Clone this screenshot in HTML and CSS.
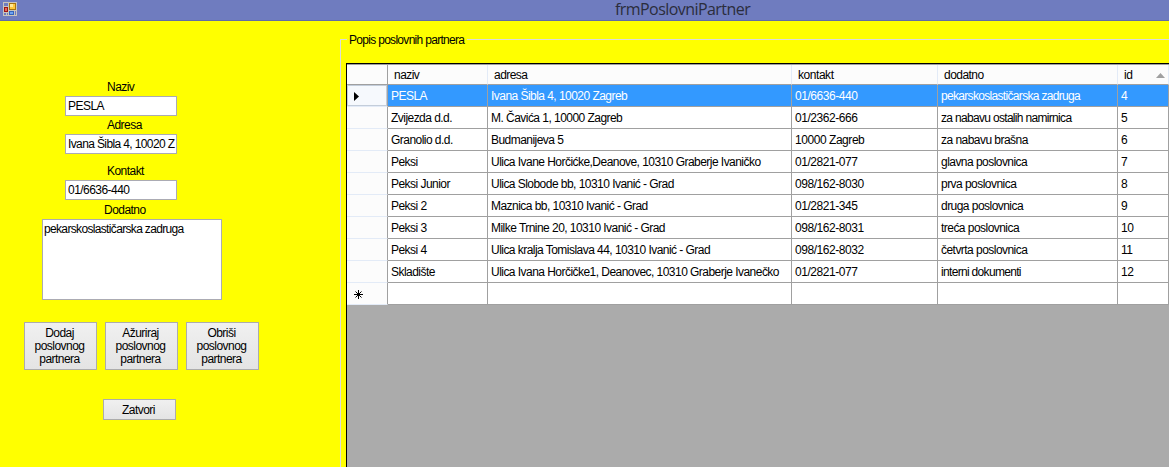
FILE: index.html
```html
<!DOCTYPE html>
<html lang="hr">
<head>
<meta charset="utf-8">
<title>frmPoslovniPartner</title>
<link rel="stylesheet" href="styles.css">
</head>
<body>
<div class="window">
  <header class="titlebar">
    <svg class="app-icon" width="14" height="14" viewBox="0 0 14 14" shape-rendering="crispEdges">
      <path fill="#c9c5bd" d="M0 0h14v14H0z"/>
      <path fill="#6f7cbf" d="M1 1h4v3H1zM1 11h2v2H1zM4 11h1v2H4zM12 9h1v4h-1z"/>
      <path fill="#a87410" d="M6 1h7v7H6z"/>
      <path fill="#ffc83c" d="M7 2h5v5H7z"/>
      <path fill="#ffe999" d="M7 2h3v3H7z"/>
      <path fill="#9c1414" d="M1 5h4v5H1z"/>
      <path fill="#e06a5a" d="M2 6h2v3H2z"/>
      <path fill="#3264bd" d="M6 9h5v4H6z"/>
      <path fill="#6fa4f0" d="M7 10h3v2H7z"/>
    </svg>
    <h1 class="caption">frmPoslovniPartner</h1>
  </header>
  <main class="client">
    <section class="form">
      <div class="field naziv"><label>Naziv</label><div class="textbox">PESLA</div></div>
      <div class="field adresa"><label>Adresa</label><div class="textbox"><div class="value">Ivana Šibla 4, 10020 Z</div></div></div>
      <div class="field kontakt"><label>Kontakt</label><div class="textbox">01/6636-440</div></div>
      <div class="field dodatno"><label>Dodatno</label><div class="textbox memo">pekarskoslastičarska zadruga</div></div>
      <div class="actions">
        <button>Dodaj<br>poslovnog<br>partnera</button>
        <button>Ažuriraj<br>poslovnog<br>partnera</button>
        <button>Obriši<br>poslovnog<br>partnera</button>
      </div>
      <button class="close">Zatvori</button>
    </section>
    <section class="group">
      <h2 class="legend">Popis poslovnih partnera</h2>
      <div class="grid">
        <div class="row head"><span></span><span>naziv</span><span>adresa</span><span>kontakt</span><span>dodatno</span><span class="sorted">id<svg width="9" height="5" viewBox="0 0 9 5"><path fill="#a0a0a0" d="M4.5 0 9 5H0z"/></svg></span></div>
        <div class="row selected"><span class="mark"><svg width="5" height="9" viewBox="0 0 5 9"><path d="M0 0 5 4.5 0 9z"/></svg></span><span>PESLA</span><span>Ivana Šibla 4, 10020 Zagreb</span><span>01/6636-440</span><span class="tight">pekarskoslastičarska zadruga</span><span>4</span></div>
        <div class="row"><span></span><span>Zvijezda d.d.</span><span>M. Čavića 1, 10000 Zagreb</span><span>01/2362-666</span><span class="tight">za nabavu ostalih namirnica</span><span>5</span></div>
        <div class="row"><span></span><span>Granolio d.d.</span><span>Budmanijeva 5</span><span>10000 Zagreb</span><span>za nabavu brašna</span><span>6</span></div>
        <div class="row"><span></span><span>Peksi</span><span>Ulica Ivane Horčićke,Deanove, 10310 Graberje Ivaničko</span><span>01/2821-077</span><span>glavna poslovnica</span><span>7</span></div>
        <div class="row"><span></span><span>Peksi Junior</span><span>Ulica Slobode bb, 10310 Ivanić - Grad</span><span>098/162-8030</span><span>prva poslovnica</span><span>8</span></div>
        <div class="row"><span></span><span>Peksi 2</span><span>Maznica bb, 10310 Ivanić - Grad</span><span>01/2821-345</span><span>druga poslovnica</span><span>9</span></div>
        <div class="row"><span></span><span>Peksi 3</span><span>Milke Trnine 20, 10310 Ivanić - Grad</span><span>098/162-8031</span><span>treća poslovnica</span><span>10</span></div>
        <div class="row"><span></span><span>Peksi 4</span><span>Ulica kralja Tomislava 44, 10310 Ivanić - Grad</span><span>098/162-8032</span><span>četvrta poslovnica</span><span>11</span></div>
        <div class="row"><span></span><span>Skladište</span><span>Ulica Ivana Horčičke1, Deanovec, 10310 Graberje Ivanečko</span><span>01/2821-077</span><span class="tight">interni dokumenti</span><span>12</span></div>
        <div class="row"><span class="mark new"><svg width="9" height="9" viewBox="0 0 9 9"><path stroke="#000" fill="none" d="M4.5 0v9M0 4.5h9M1.5 1.5l6 6M7.5 1.5l-6 6"/></svg></span><span></span><span></span><span></span><span></span><span></span></div>
      </div>
    </section>
  </main>
</div>
</body>
</html>
```
FILE: styles.css
```css
* { box-sizing: border-box; }
body {
  margin: 0;
  font: 12px/13px "Liberation Sans", Arial, sans-serif;
  letter-spacing: -0.54px;
  color: #000;
}
.window {
  width: 1169px;
  height: 467px;
  overflow: hidden;
  display: flex;
  flex-direction: column;
}
.titlebar {
  flex: none;
  height: 21px;
  background: #6f7cbf;
  border-bottom: 1px solid #626ca6;
  display: flex;
  align-items: flex-start;
  padding: 0 0 0 3px;
}
.app-icon { margin-top: 2px; }
.caption {
  margin: 0 0 0 598px;
  font: 16px/18px "Open Sans", "Noto Sans", sans-serif;
  letter-spacing: -0.56px;
  color: #2b2d3c;
}
.client {
  flex: 1;
  min-height: 0;
  background: #ff0;
  display: flex;
}
.form {
  width: 340px;
  flex: none;
  padding-top: 59px;
}
.field { padding-left: 65px; height: 38px; }
.field label { display: block; height: 16px; padding-left: 42px; line-height: 14px; }
.field.adresa { height: 46px; }
.field.kontakt { height: 39px; }
.field.dodatno { height: 119px; padding-left: 42px; }
.field.dodatno label { padding-left: 62px; }
.textbox {
  width: 112px;
  height: 20px;
  border: 1px solid #ababb3;
  background: #fff;
  padding: 2px 0 0 2px;
  line-height: 14px;
  white-space: nowrap;
}
.value { letter-spacing: -0.62px; }
.textbox.memo { width: 180px; height: 81px; padding-left: 1px; letter-spacing: -0.66px; }
button {
  font: inherit;
  letter-spacing: inherit;
  color: inherit;
  padding: 0;
  border: 1px solid #acacac;
  background: linear-gradient(#f0f0f0, #e4e4e4);
}
.actions { display: flex; gap: 8px; padding-left: 24px; }
.actions button { width: 73px; height: 48px; padding-right: 2px; }
.close { display: block; width: 73px; height: 21px; margin: 29px 0 0 103px; padding: 1px 2px 0 0; }
.group {
  flex: 1;
  min-width: 0;
  margin-top: 18px;
  border-left: 1px solid #dcdcdc;
  padding-left: 5px;
}
.legend {
  display: flex;
  align-items: flex-start;
  margin: -6px 0 0 -5px;
  padding-left: 8px;
  height: 30px;
  font: inherit;
  letter-spacing: -0.7px;
  line-height: 14px;
  white-space: nowrap;
}
.legend::before { content: ""; width: 6px; height: 1px; margin: 6px 2px 0 -8px; background: #dcdcdc; }
.legend::after { content: ""; flex: 1; height: 1px; margin: 6px 0 0 3px; background: #dcdcdc; }
.grid {
  height: 404px;
  background: #ababab;
  border-left: 1px solid #000;
  border-top: 1px solid #000;
}
.row {
  display: grid;
  grid-template-columns: 41px 100px 304px 146px 180px 51px;
  height: 22px;
}
.row span {
  background: #fff;
  border-right: 1px solid #a0a0a0;
  border-bottom: 1px solid #a0a0a0;
  padding: 4px 0 0 3px;
  line-height: 14px;
  white-space: nowrap;
}
.row span:first-child { background: #fcfcfc; border-bottom-color: #e3ebf7; }
.row span:nth-child(4) { letter-spacing: -0.45px; }
.row .tight { letter-spacing: -0.68px; }
.row.head { height: 21px; border-top: 1px solid #a0a0a0; }
.row.head span { background: #fcfcfc; border-right-color: #e3ebf7; border-bottom-color: #a0a0a0; padding: 3px 0 0 6px; }
.row.head span:first-child { border-right-color: #a0a0a0; }
.row.head .sorted { display: flex; justify-content: space-between; padding-right: 3px; }
.sorted svg { margin-top: 5px; }
.row.selected span:not(:first-child) { background: #39f; color: #fff; }
.row .mark { display: flex; padding: 7px 0 0 7px; }
.row.selected .mark { background: #f6f9fd; box-shadow: inset 0 0 0 1px #c3cdda; }
```
